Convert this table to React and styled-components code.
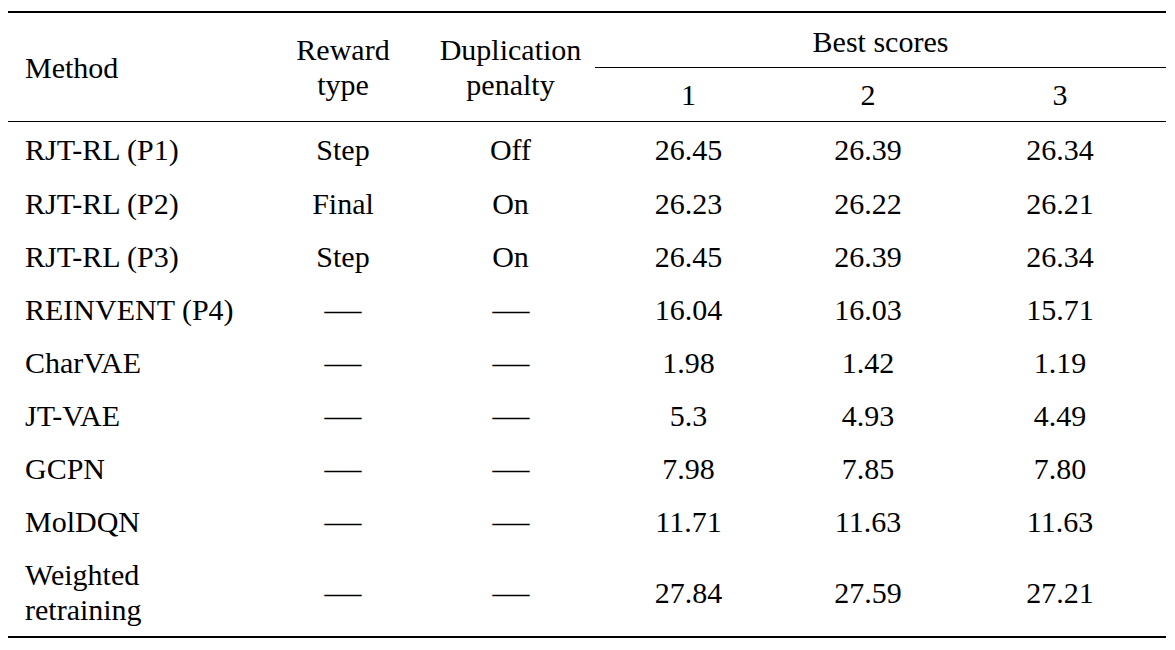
import React from "react";
import styled, { createGlobalStyle } from "styled-components";

const Global = createGlobalStyle`
  html, body { margin: 0; padding: 0; background: #fff; }
  body { font-family: "Liberation Serif", "Times New Roman", serif; color: #000; }
`;

const Page = styled.div`
  width: 1175px;
  height: 650px;
  padding: 11px 9px 0 8px;
  box-sizing: border-box;
  background: #fff;
`;

const Table = styled.div`
  display: grid;
  grid-template-columns: 252px 166px 169px 187px 172px 212px;
  border-top: 2px solid #000;
  border-bottom: 2px solid #000;
  font-size: 30px;
  line-height: 35px;
`;

const HeadCell = styled.div`
  grid-column: ${(p) => p.$col};
  grid-row: ${(p) => p.$row};
  display: flex;
  align-items: center;
  justify-content: ${(p) => (p.$left ? "flex-start" : "center")};
  padding-left: ${(p) => (p.$left ? "17px" : "0")};
  padding-top: ${(p) => p.$pt || "0"};
  text-align: center;
  border-bottom: 1px solid #000;
  height: ${(p) => p.$h || "auto"};
  box-sizing: border-box;
`;

const Cell = styled.div`
  display: flex;
  align-items: center;
  justify-content: ${(p) => (p.$left ? "flex-start" : "center")};
  padding-left: ${(p) => (p.$left ? "17px" : "0")};
  height: ${(p) => p.$h}px;
  box-sizing: border-box;
  text-align: ${(p) => (p.$left ? "left" : "center")};
`;

const Dash = styled.span`
  display: inline-block;
  transform: scaleX(1.23);
`;

const rows = [
  ["RJT-RL (P1)", "Step", "Off", "26.45", "26.39", "26.34"],
  ["RJT-RL (P2)", "Final", "On", "26.23", "26.22", "26.21"],
  ["RJT-RL (P3)", "Step", "On", "26.45", "26.39", "26.34"],
  ["REINVENT (P4)", null, null, "16.04", "16.03", "15.71"],
  ["CharVAE", null, null, "1.98", "1.42", "1.19"],
  ["JT-VAE", null, null, "5.3", "4.93", "4.49"],
  ["GCPN", null, null, "7.98", "7.85", "7.80"],
  ["MolDQN", null, null, "11.71", "11.63", "11.63"],
  [["Weighted", "retraining"], null, null, "27.84", "27.59", "27.21"],
];

export default function App() {
  return (
    <Page>
      <Global />
      <Table>
        <HeadCell $col="1" $row="1 / 3" $left>Method</HeadCell>
        <HeadCell $col="2" $row="1 / 3">Reward<br />type</HeadCell>
        <HeadCell $col="3" $row="1 / 3">Duplication<br />penalty</HeadCell>
        <HeadCell $col="4 / 7" $row="1" $h="55px" $pt="2px">Best scores</HeadCell>
        <HeadCell $col="4" $row="2" $h="54px">1</HeadCell>
        <HeadCell $col="5" $row="2" $h="54px">2</HeadCell>
        <HeadCell $col="6" $row="2" $h="54px">3</HeadCell>
        {rows.map((r, i) => {
          const h = i === 0 ? 55 : i === rows.length - 1 ? 88 : 53;
          return (
            <React.Fragment key={i}>
              <Cell $left $h={h}>
                {Array.isArray(r[0]) ? (
                  <span>
                    {r[0][0]}
                    <br />
                    {r[0][1]}
                  </span>
                ) : (
                  r[0]
                )}
              </Cell>
              <Cell $h={h}>{r[1] ?? <Dash>—</Dash>}</Cell>
              <Cell $h={h}>{r[2] ?? <Dash>—</Dash>}</Cell>
              <Cell $h={h}>{r[3]}</Cell>
              <Cell $h={h}>{r[4]}</Cell>
              <Cell $h={h}>{r[5]}</Cell>
            </React.Fragment>
          );
        })}
      </Table>
    </Page>
  );
}
